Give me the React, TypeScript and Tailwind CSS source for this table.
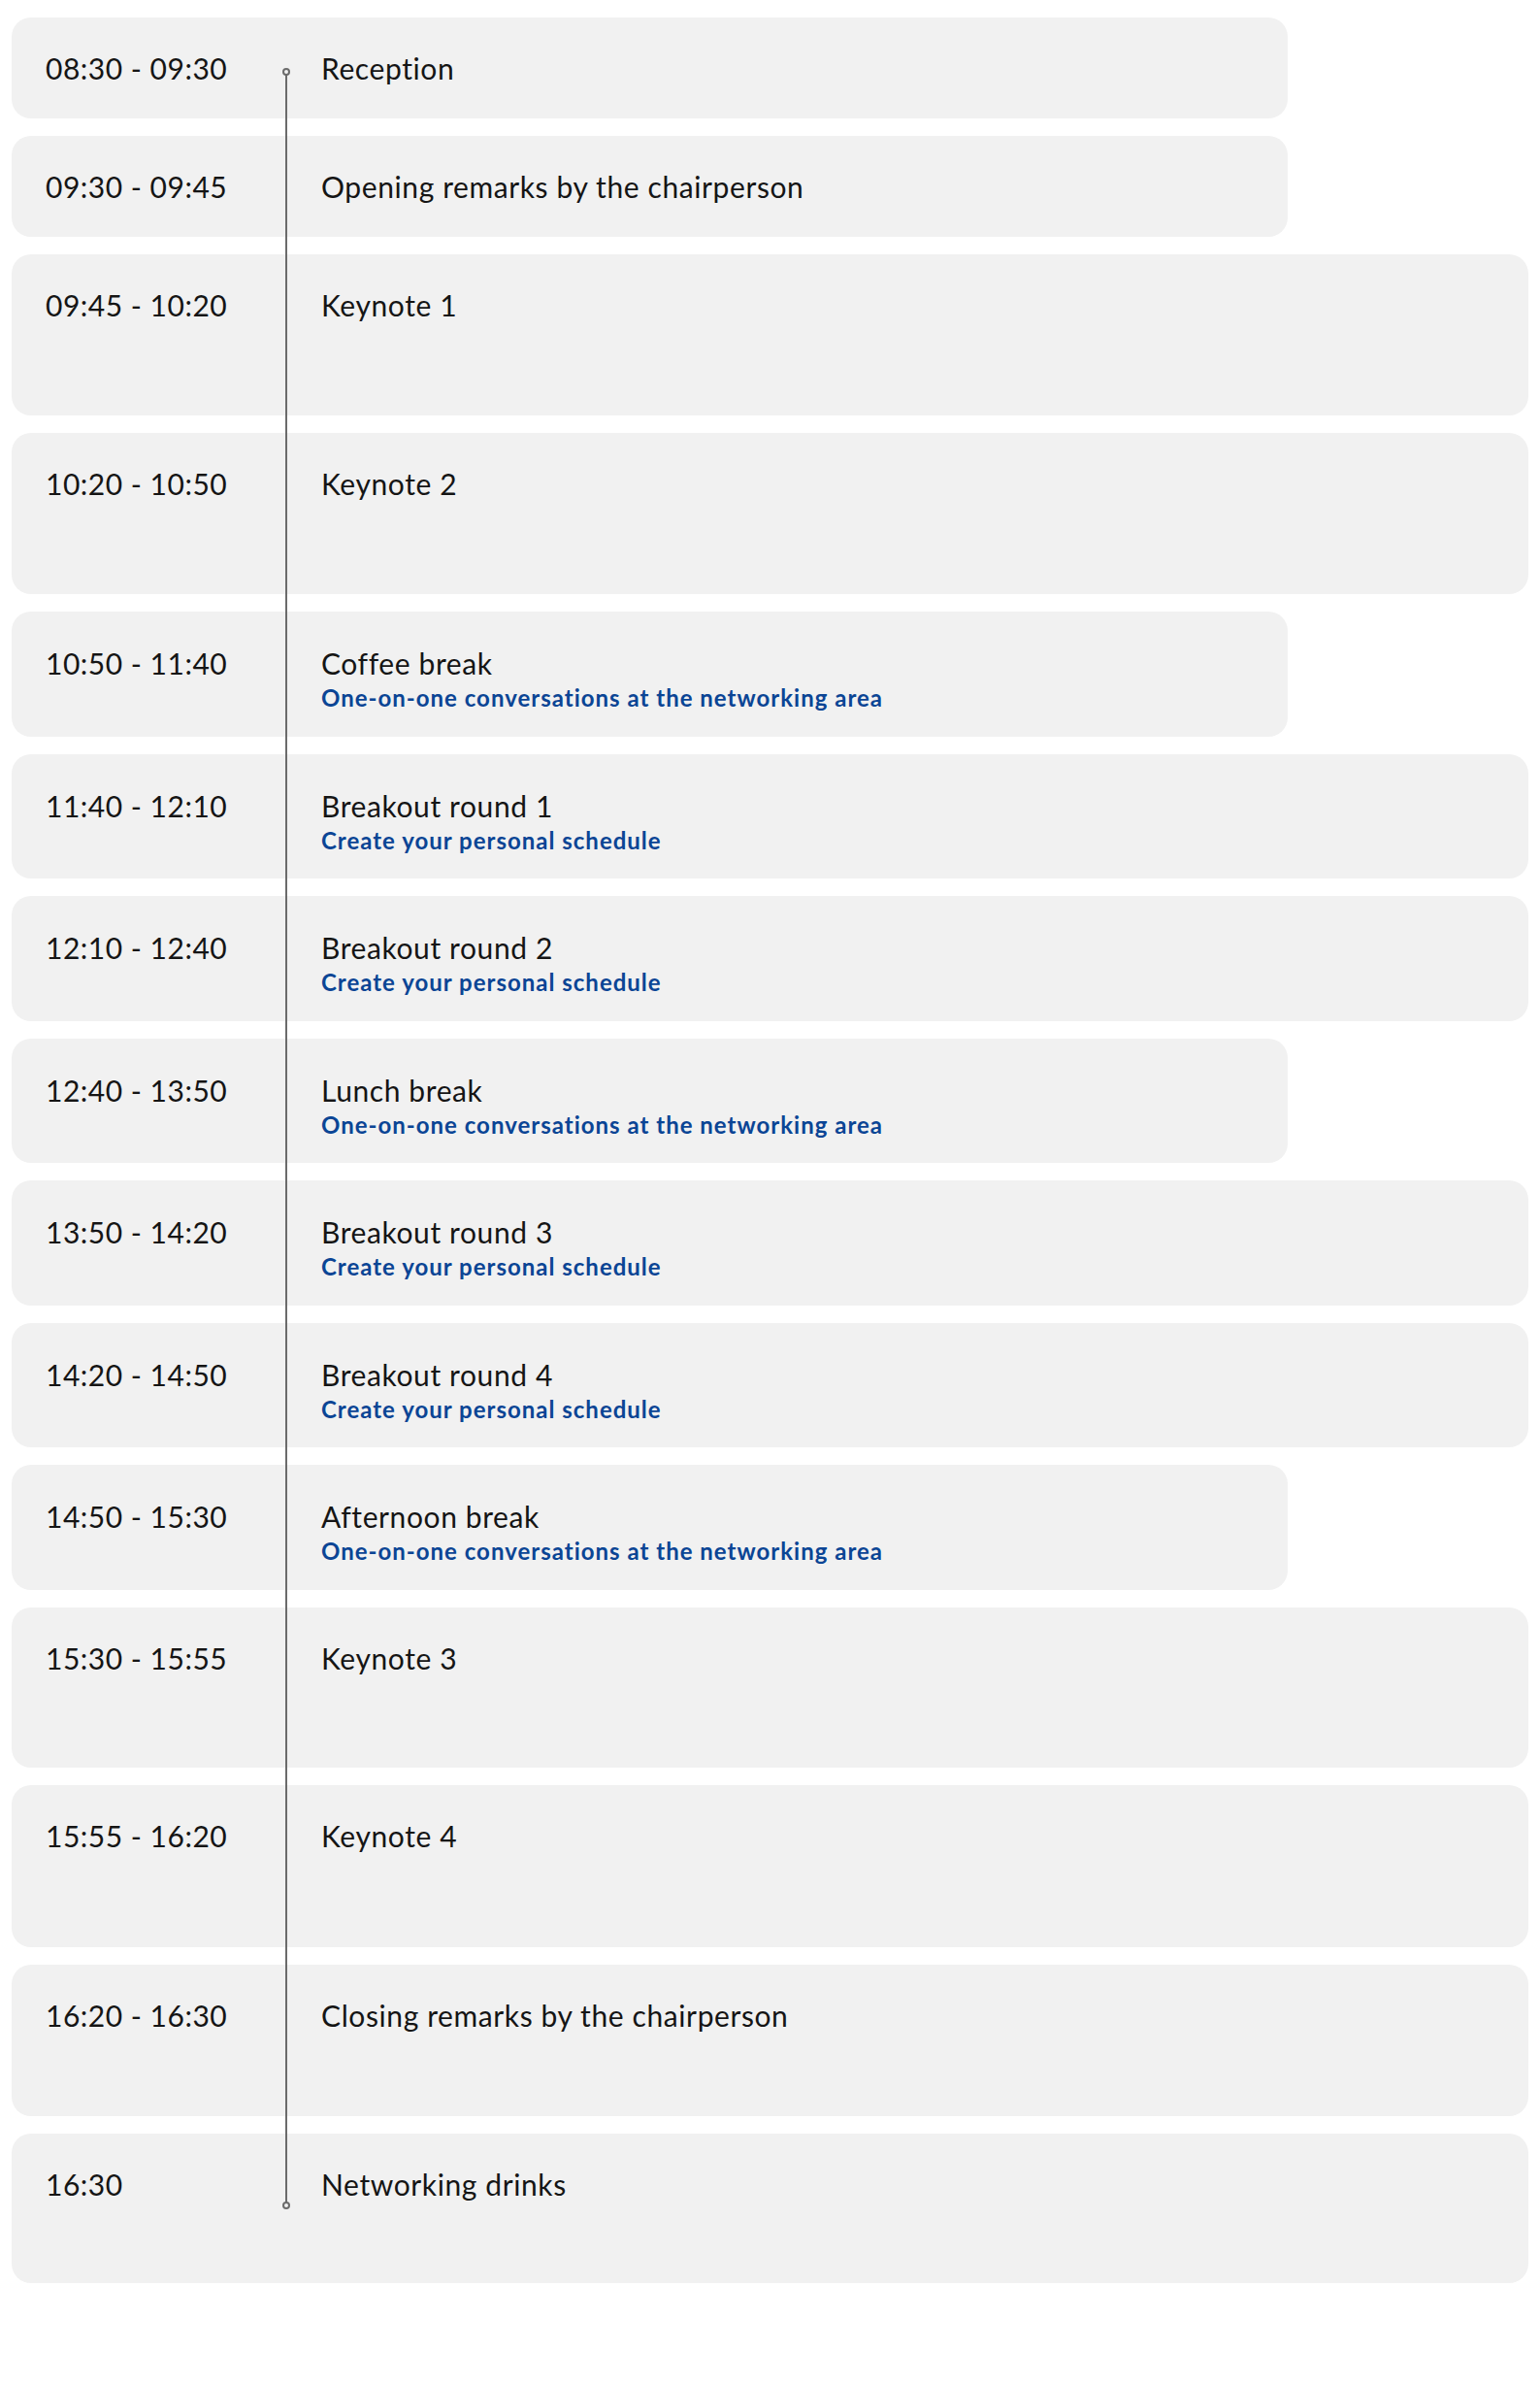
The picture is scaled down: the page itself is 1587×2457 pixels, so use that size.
import React from 'react';

interface Session {
  time: string;
  title: string;
  note?: string;
  wide: boolean;
  height: string;
}

const sessions: Session[] = [
  { time: '08:30 - 09:30', title: 'Reception', wide: false, height: 'h-[104px]' },
  { time: '09:30 - 09:45', title: 'Opening remarks by the chairperson', wide: false, height: 'h-[104px]' },
  { time: '09:45 - 10:20', title: 'Keynote 1', wide: true, height: 'h-[166px]' },
  { time: '10:20 - 10:50', title: 'Keynote 2', wide: true, height: 'h-[166px]' },
  { time: '10:50 - 11:40', title: 'Coffee break', note: 'One-on-one conversations at the networking area', wide: false, height: 'h-[129px]' },
  { time: '11:40 - 12:10', title: 'Breakout round 1', note: 'Create your personal schedule', wide: true, height: 'h-[128px]' },
  { time: '12:10 - 12:40', title: 'Breakout round 2', note: 'Create your personal schedule', wide: true, height: 'h-[129px]' },
  { time: '12:40 - 13:50', title: 'Lunch break', note: 'One-on-one conversations at the networking area', wide: false, height: 'h-[128px]' },
  { time: '13:50 - 14:20', title: 'Breakout round 3', note: 'Create your personal schedule', wide: true, height: 'h-[129px]' },
  { time: '14:20 - 14:50', title: 'Breakout round 4', note: 'Create your personal schedule', wide: true, height: 'h-[128px]' },
  { time: '14:50 - 15:30', title: 'Afternoon break', note: 'One-on-one conversations at the networking area', wide: false, height: 'h-[129px]' },
  { time: '15:30 - 15:55', title: 'Keynote 3', wide: true, height: 'h-[165px]' },
  { time: '15:55 - 16:20', title: 'Keynote 4', wide: true, height: 'h-[167px]' },
  { time: '16:20 - 16:30', title: 'Closing remarks by the chairperson', wide: true, height: 'h-[156px]' },
  { time: '16:30', title: 'Networking drinks', wide: true, height: 'h-[154px]' },
];

const SessionRow: React.FC<{ session: Session }> = ({ session }) => (
  <div
    className={`${session.wide ? 'w-[1563px]' : 'w-[1315px]'} ${session.height} ${
      session.note ? 'pt-[35px]' : 'pt-[34px]'
    } grid grid-cols-[284px_1fr] rounded-[20px] bg-[#f1f1f1] pl-[35px]`}
  >
    <div className="text-[30px] leading-[36px] tracking-[0.5px] text-[#151515]">{session.time}</div>
    <div>
      <div className="text-[30px] leading-[36px] tracking-[0.6px] text-[#151515]">{session.title}</div>
      {session.note && (
        <div className="mt-[4px] text-[24px] font-bold leading-[28px] tracking-[1px] text-[#0b4595]">
          {session.note}
        </div>
      )}
    </div>
  </div>
);

export default function App() {
  return (
    <div className="min-h-[2457px] bg-white font-['Lato','Liberation_Sans',sans-serif]">
      <div className="relative flex flex-col gap-[18px] pl-[12px] pt-[18px]">
        {sessions.map((s, i) => (
          <SessionRow key={i} session={s} />
        ))}

        {/* timeline running through every row */}
        <div className="pointer-events-none absolute left-[290px] top-[70px] h-[2206px] w-[10px]">
          <div className="absolute left-[4px] top-[4px] h-[2198px] w-[2px] bg-[#6b6b6b]" />
          <div className="absolute left-[1px] top-0 h-[8px] w-[8px] rounded-full border-2 border-[#6b6b6b] bg-[#f1f1f1]" />
          <div className="absolute bottom-0 left-[1px] h-[8px] w-[8px] rounded-full border-2 border-[#6b6b6b] bg-[#f1f1f1]" />
        </div>
      </div>
    </div>
  );
}
